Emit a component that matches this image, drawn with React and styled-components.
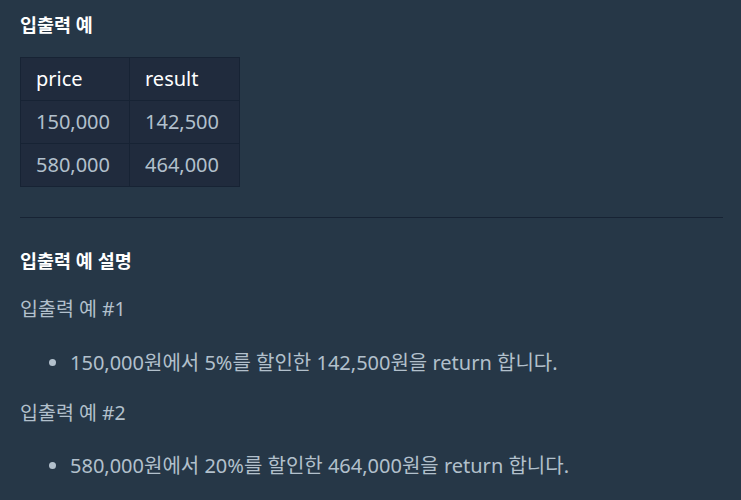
import React from "react";
import styled, { createGlobalStyle } from "styled-components";

const GlobalStyle = createGlobalStyle`
  html, body {
    margin: 0;
    padding: 0;
    background: #263747;
  }
  body {
    font-family: "Noto Sans", "Noto Sans CJK KR", sans-serif;
    color: #b2c0cc;
  }
`;

const Page = styled.div`
  width: 741px;
  height: 500px;
  overflow: hidden;
  box-sizing: border-box;
  padding: 13px 18px 0 20px;
  background: #263747;
`;

const Heading = styled.h5`
  margin: 0;
  font-family: "Noto Sans", "Noto Sans CJK KR", sans-serif;
  font-size: 18.5px;
  font-weight: 700;
  line-height: 24px;
  color: #ffffff;
  margin-top: ${(p) => p.$top || 0}px;
`;

const Table = styled.table`
  margin-top: 20px;
  border-collapse: collapse;
  background: #202b3d;
  font-size: 20px;
`;

const Cell = styled.td`
  height: 43px;
  box-sizing: border-box;
  padding: 0 15px;
  border: 1px solid #172334;
  color: ${(p) => (p.$head ? "#ffffff" : "#b2c0cc")};
  width: ${(p) => p.$w}px;
  line-height: 24px;
`;

const Divider = styled.hr`
  margin: 30px 0 0;
  border: 0;
  border-top: 1px solid #172334;
`;

const Para = styled.p`
  margin: ${(p) => p.$top || 0}px 0 0;
  font-size: 19.5px;
  line-height: 28px;
`;

const List = styled.ul`
  margin: ${(p) => p.$top || 0}px 0 0;
  padding-left: 50px;
  font-size: 20px;
  line-height: 28px;
`;

const rows = [
  ["150,000", "142,500"],
  ["580,000", "464,000"],
];

export default function App() {
  return (
    <Page>
      <GlobalStyle />
      <Heading>입출력 예</Heading>
      <Table>
        <tbody>
          <tr>
            <Cell $head $w={109}>price</Cell>
            <Cell $head $w={110}>result</Cell>
          </tr>
          {rows.map((r) => (
            <tr key={r[0]}>
              <Cell>{r[0]}</Cell>
              <Cell>{r[1]}</Cell>
            </tr>
          ))}
        </tbody>
      </Table>
      <Divider />
      <Heading $top={31}>입출력 예 설명</Heading>
      <Para $top={22}>입출력 예 #1</Para>
      <List $top={26}>
        <li>150,000원에서 5%를 할인한 142,500원을 return 합니다.</li>
      </List>
      <Para $top={22}>입출력 예 #2</Para>
      <List $top={25}>
        <li>580,000원에서 20%를 할인한 464,000원을 return 합니다.</li>
      </List>
    </Page>
  );
}
